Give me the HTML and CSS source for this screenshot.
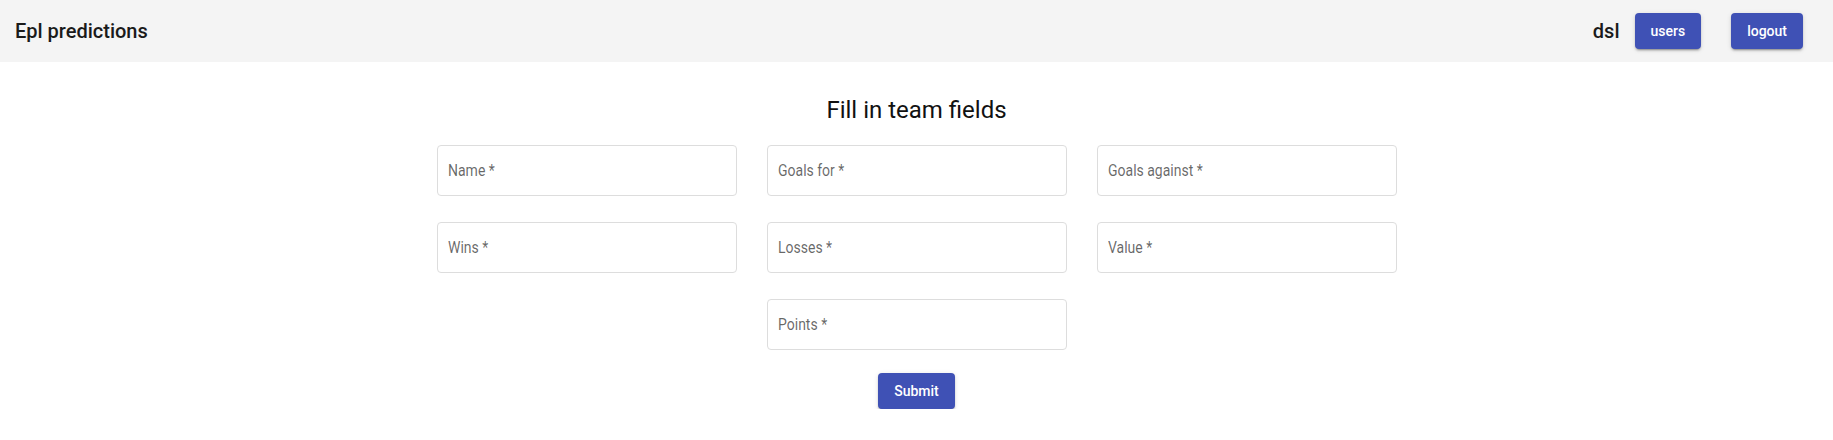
FILE: index.html
```html
<!DOCTYPE html>
<html lang="en">
<head>
<meta charset="utf-8">
<title>Epl predictions</title>
<link rel="stylesheet" href="styles.css">
</head>
<body>
<header class="topbar">
  <div class="brand">Epl predictions</div>
  <div class="topbar-right">
    <span class="username">dsl</span>
    <button class="btn">users</button>
    <button class="btn">logout</button>
  </div>
</header>
<main class="content">
  <h1 class="title">Fill in team fields</h1>
  <form class="team-form">
    <div class="grid">
      <div class="field"><span class="label">Name *</span></div>
      <div class="field"><span class="label">Goals for *</span></div>
      <div class="field"><span class="label">Goals against *</span></div>
      <div class="field"><span class="label">Wins *</span></div>
      <div class="field"><span class="label">Losses *</span></div>
      <div class="field"><span class="label">Value *</span></div>
      <div class="field col-2"><span class="label">Points *</span></div>
    </div>
    <div class="actions">
      <button type="button" class="btn">Submit</button>
    </div>
  </form>
</main>
</body>
</html>
```

FILE: styles.css
```css
* { box-sizing: border-box; }

html, body {
  margin: 0;
  padding: 0;
  background: #ffffff;
  font-family: Roboto, "Noto Sans", "Liberation Sans", sans-serif;
  color: rgba(0, 0, 0, 0.87);
}

.topbar {
  height: 62px;
  background: #f4f4f4;
  display: flex;
  align-items: center;
  justify-content: space-between;
  padding: 0 30px 0 15px;
}

.brand {
  font-size: 20px;
  font-weight: 500;
  line-height: 1.6;
  color: #1a1a1a;
}

.topbar-right {
  display: flex;
  align-items: center;
  gap: 30px;
}

.username {
  font-size: 20px;
  font-weight: 500;
  color: #1a1a1a;
  margin-right: -15px;
}

.btn {
  font-family: Roboto, "Noto Sans", "Liberation Sans", sans-serif;
  height: 36px;
  padding: 0 16px;
  border: none;
  border-radius: 4px;
  background: #3f51b5;
  color: #ffffff;
  font-size: 14px;
  font-weight: 500;
  box-shadow: 0 3px 1px -2px rgba(0,0,0,0.2), 0 2px 2px 0 rgba(0,0,0,0.14), 0 1px 5px 0 rgba(0,0,0,0.12);
  cursor: pointer;
}

.content {
  display: flex;
  flex-direction: column;
  align-items: center;
  padding-top: 32px;
}

.title {
  margin: 0;
  font-size: 24px;
  font-weight: 400;
  line-height: 32px;
  color: #111111;
}

.team-form {
  margin-top: 19px;
  width: 960px;
}

.grid {
  display: grid;
  grid-template-columns: repeat(3, 300px);
  column-gap: 30px;
  row-gap: 26px;
}

.field {
  height: 51px;
  border: 1px solid #dddddd;
  border-radius: 4px;
  display: flex;
  align-items: center;
  padding-left: 10px;
}

.col-2 { grid-column: 2; }

.label {
  font-size: 16px;
  color: rgba(0, 0, 0, 0.6);
  transform: scaleX(0.875);
  transform-origin: left center;
}

.actions {
  display: flex;
  justify-content: center;
  margin-top: 23px;
}
```
